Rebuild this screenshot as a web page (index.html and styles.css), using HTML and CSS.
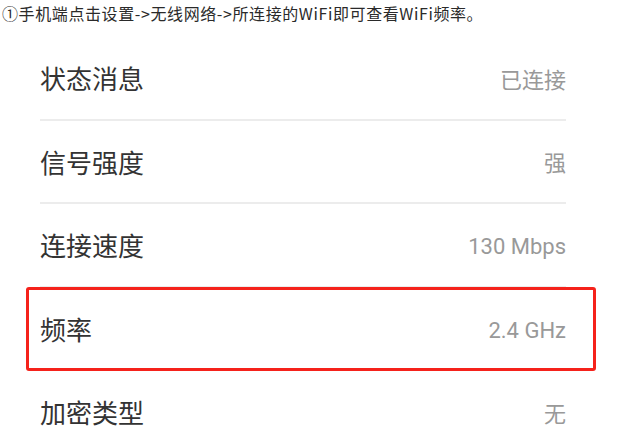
FILE: index.html
```html
<!DOCTYPE html>
<html>
<head>
    <title>WiFi频率</title>
    <link rel="stylesheet" href="styles.css">
</head>
<body>
    <!--说明文字-->
    <p class="tip">①手机端点击设置-&gt;无线网络-&gt;所连接的WiFi即可查看WiFi频率。</p>
    <!--WiFi详情列表-->
    <ul class="info">
        <li><span class="label">状态消息</span><span class="value">已连接</span></li>
        <li><span class="label">信号强度</span><span class="value">强</span></li>
        <li><span class="label">连接速度</span><span class="value num">130 Mbps</span></li>
        <li class="mark"><span class="label">频率</span><span class="value num">2.4 GHz</span></li>
        <li><span class="label">加密类型</span><span class="value">无</span></li>
    </ul>
</body>
</html>
```

FILE: styles.css
```css
 body{
     margin: 0;
     background-color: #fff;
     font-family: "Noto Sans CJK SC", sans-serif;
     overflow: hidden;
 }
 /*顶部说明*/
 p.tip{
     margin: 0;
     padding-left: 2px;
     font-size: 16px;
     letter-spacing: 0.6px;
     line-height: 26px;
     color: #2a2a2a;
 }
 /*列表*/
 ul.info{
     list-style-type: none;
     margin: 0;
     padding: 11px 0 0 40px;
     width: 526px;
 }
 ul.info li{
     display: flex;
     justify-content: space-between;
     align-items: center;
     height: 81.5px;
     border-bottom: solid 2px #ececec;
     position: relative;
 }
 span.label{
     font-size: 26px;
     color: #333;
 }
 span.value{
     font-family: Roboto, "Noto Sans CJK SC", sans-serif;
     font-size: 22px;
     color: #999;
 }
 span.num{
     padding-top: 4px;
 }
 /*红框标注*/
 li.mark::after{
     content: "";
     position: absolute;
     top: -0.5px;
     bottom: -2px;
     left: -14px;
     right: -30px;
     border: solid 3px #f5221b;
     border-radius: 3px;
 }
```
